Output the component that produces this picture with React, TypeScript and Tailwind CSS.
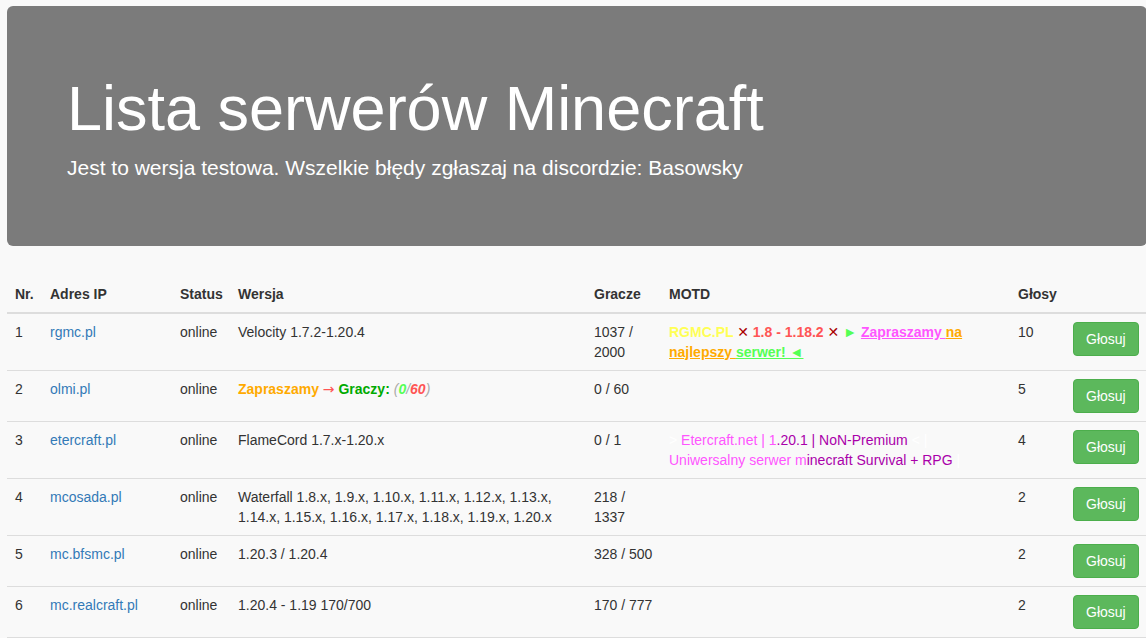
import React from 'react';

type Server = {
  nr: number;
  ip: string;
  status: string;
  version: React.ReactNode;
  players: React.ReactNode;
  motd: React.ReactNode;
  votes: number;
};

const servers: Server[] = [
  {
    nr: 1,
    ip: 'rgmc.pl',
    status: 'online',
    version: 'Velocity 1.7.2-1.20.4',
    players: (
      <>
        1037 /<br />2000
      </>
    ),
    motd: (
      <>
        <span className="font-bold text-[#ffff55]">RGMC.PL </span>
        <span className="font-bold text-[#aa0000] font-['DejaVu_Sans']">✕</span>
        <span className="font-bold text-[#ff5555]"> 1.8 - 1.18.2 </span>
        <span className="font-bold text-[#aa0000] font-['DejaVu_Sans']">✕</span>
        <span className="text-[#55ff55]"> ► </span>
        <span className="font-bold underline text-[#ff55ff]">Zapraszamy </span>
        <span className="font-bold underline text-[#ffaa00]">na najlepszy </span>
        <span className="font-bold underline text-[#55ff55]">serwer! ◄</span>
      </>
    ),
    votes: 10,
  },
  {
    nr: 2,
    ip: 'olmi.pl',
    status: 'online',
    version: (
      <>
        <span className="font-bold text-[#ffaa00]">Zapraszamy</span>
        <span className="text-[#ff5555]">
          {' '}
          <span className="font-['DejaVu_Sans']">→</span>{' '}
        </span>
        <span className="font-bold text-[#00aa00]">Graczy: </span>
        <span className="italic text-[#aaaaaa]">(</span>
        <span className="italic font-bold text-[#55ff55]">0</span>
        <span className="italic text-[#aaaaaa]">/</span>
        <span className="italic font-bold text-[#ff5555]">60</span>
        <span className="italic text-[#aaaaaa]">)</span>
      </>
    ),
    players: '0 / 60',
    motd: null,
    votes: 5,
  },
  {
    nr: 3,
    ip: 'etercraft.pl',
    status: 'online',
    version: 'FlameCord 1.7.x-1.20.x',
    players: '0 / 1',
    motd: (
      <>
        <span className="text-white">&gt; </span>
        <span className="text-[#ff55ff]">Etercraft.net | 1</span>
        <span className="text-[#aa00aa]">.20.1 | NoN-Premium</span>
        <span className="text-white"> &lt; |</span>
        <br />
        <span className="text-[#ff55ff]">Uniwersalny serwer m</span>
        <span className="text-[#aa00aa]">inecraft Survival + RPG</span>
        <span className="text-white"> |</span>
      </>
    ),
    votes: 4,
  },
  {
    nr: 4,
    ip: 'mcosada.pl',
    status: 'online',
    version:
      'Waterfall 1.8.x, 1.9.x, 1.10.x, 1.11.x, 1.12.x, 1.13.x, 1.14.x, 1.15.x, 1.16.x, 1.17.x, 1.18.x, 1.19.x, 1.20.x',
    players: (
      <>
        218 /<br />1337
      </>
    ),
    motd: null,
    votes: 2,
  },
  {
    nr: 5,
    ip: 'mc.bfsmc.pl',
    status: 'online',
    version: '1.20.3 / 1.20.4',
    players: '328 / 500',
    motd: null,
    votes: 2,
  },
  {
    nr: 6,
    ip: 'mc.realcraft.pl',
    status: 'online',
    version: '1.20.4 - 1.19 170/700',
    players: '170 / 777',
    motd: null,
    votes: 2,
  },
];

export default function App() {
  return (
    <div
      className="min-h-screen bg-[#f9f9f9] text-[#333333] text-[14px] leading-[20px]"
      style={{ fontFamily: '"Liberation Sans", Arial, sans-serif' }}
    >
      <div className="pl-[7px] pt-[6px] w-[1147px]">
        {/* jumbotron */}
        <div className="bg-[#7b7b7b] rounded-[6px] px-[60px] py-[48px] mb-[30px] text-white">
          <h1 className="text-[63px] leading-[69px] mt-[20px] mb-[10px] font-normal">
            Lista serwerów Minecraft
          </h1>
          <p className="text-[21px] leading-[30px] mb-[15px] font-[300]">
            Jest to wersja testowa. Wszelkie błędy zgłaszaj na discordzie: Basowsky
          </p>
        </div>

        <table className="w-[1140px] border-collapse table-fixed">
          <colgroup>
            <col className="w-[35px]" />
            <col className="w-[130px]" />
            <col className="w-[58px]" />
            <col className="w-[356px]" />
            <col className="w-[75px]" />
            <col className="w-[349px]" />
            <col className="w-[55px]" />
            <col className="w-[82px]" />
          </colgroup>
          <thead>
            <tr className="border-b-2 border-[#dddddd]">
              {['Nr.', 'Adres IP', 'Status', 'Wersja', 'Gracze', 'MOTD', 'Głosy', ''].map((h, i) => (
                <th key={i} className="p-[8px] text-left font-bold align-bottom">
                  {h}
                </th>
              ))}
            </tr>
          </thead>
          <tbody>
            {servers.map((s) => (
              <tr key={s.nr} className="border-t border-[#dddddd]">
                <td className="p-[8px] align-top">{s.nr}</td>
                <td className="p-[8px] align-top">
                  <a href="#" className="text-[#337ab7]">
                    {s.ip}
                  </a>
                </td>
                <td className="p-[8px] align-top">{s.status}</td>
                <td className="p-[8px] align-top">{s.version}</td>
                <td className="p-[8px] align-top">{s.players}</td>
                <td className="p-[8px] align-top">{s.motd}</td>
                <td className="p-[8px] align-top">{s.votes}</td>
                <td className="p-[8px] align-top">
                  <button className="bg-[#5cb85c] border border-[#4cae4c] text-white rounded-[4px] px-[12px] py-[6px] leading-[20px]">
                    Głosuj
                  </button>
                </td>
              </tr>
            ))}
            <tr className="border-t border-[#dddddd]">
              <td colSpan={8} className="h-[40px]"></td>
            </tr>
          </tbody>
        </table>
      </div>
    </div>
  );
}
